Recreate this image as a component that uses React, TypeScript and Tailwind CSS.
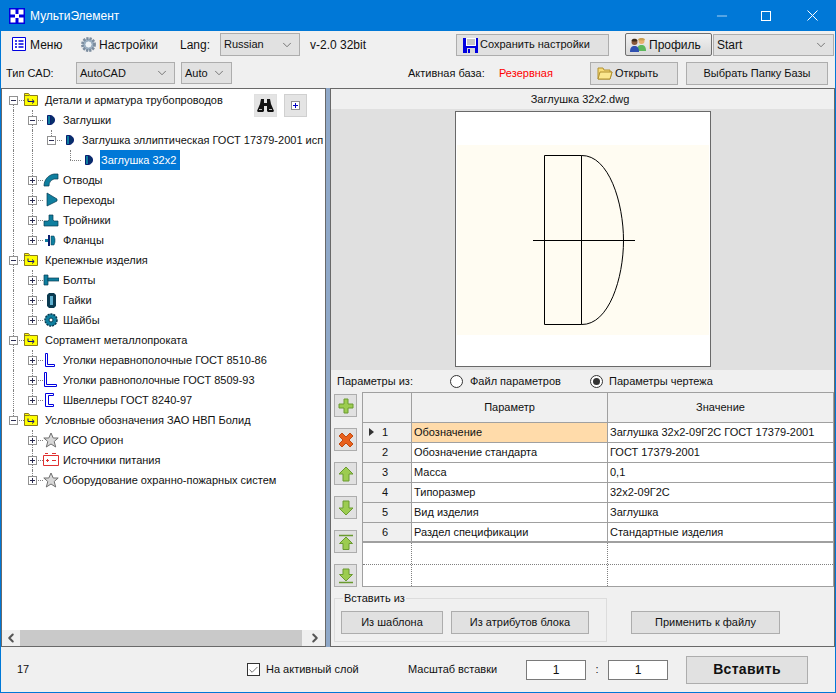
import React from 'react';
import { ChevronDown, Minus, Check, ChevronLeft, ChevronRight } from 'lucide-react';

const Btn = ({ className = '', children }: { className?: string; children: React.ReactNode }) => (
  <div className={`flex shrink-0 items-center justify-center border border-[#adadad] bg-[#e1e1e1] ${className}`}>{children}</div>
);

const Select = ({ value, className = '' }: { value: string; className?: string }) => (
  <div className={`flex shrink-0 items-center justify-between border border-[#adadad] bg-[#e1e1e1] pl-[3px] pr-[5px] ${className}`}>
    <span>{value}</span>
    <ChevronDown className="h-3.5 w-3.5 text-[#555]" strokeWidth={1.3} />
  </div>
);

const Floppy = () => (
  <svg width="16" height="16" viewBox="0 0 16 16" className="shrink-0">
    <path d="M0 1h15v15H0z" fill="#0000e0" />
    <path d="M3 1h10v8H3z" fill="#fff" />
    <path d="M4 3h8M4 5h8M4 7h8" stroke="#8a8a8a" />
    <path d="M4 11h8v5H4z" fill="#d8d8d8" />
    <path d="M5 12h2v4H5z" fill="#0000e0" />
  </svg>
);

const Users = () => (
  <svg width="18" height="16" viewBox="0 0 18 16" className="shrink-0">
    <circle cx="12.5" cy="4" r="3" fill="#e8b070" />
    <path d="M9 2.500c1-2 6-2 7 0l-1 1h-5z" fill="#c9a050" />
    <path d="M8 14c0-5 2-6 4.500-6s4.500 1 4.500 6z" fill="#5cb85c" />
    <circle cx="5.5" cy="5" r="3" fill="#8a5a3a" />
    <path d="M2.500 3.500c1-2.500 5-2.500 6 0l-1 1h-4z" fill="#3a2a1a" />
    <path d="M1 15c0-5 2-6 4.500-6s4.500 1 4.500 6z" fill="#3050b0" />
  </svg>
);

const SmallFolder = () => (
  <svg width="16" height="14" viewBox="0 0 16 14" className="shrink-0">
    <path d="M1 13V2h5l1 2h6v2h2l-2 7z" fill="#f8dc78" stroke="#b09030" />
    <path d="M1 13l2-7h12l-2 7z" fill="#fbe78f" stroke="#b09030" />
  </svg>
);

const TreeFolder = () => (
  <svg width="14" height="14" viewBox="0 0 14 14" className="shrink-0">
    <path d="M.5 13.500v-12h4l1.500 2h7.500v10z" fill="#ffff00" stroke="#8a7a20" />
    <path d="M.5 3.500h5" stroke="#8a7a20" />
    <path d="M4 6.500v3h6M8 7.500l2.200 2-2.200 2" fill="none" stroke="#0a0a80" />
  </svg>
);

// teal pipe fittings in the tree
const teal = '#0f7f9f';
const navy = '#0a1f70';
const fittings: Record<string, React.ReactNode> = {
  cap: (
    <>
      <path d="M4.500 3.500h3v9h-3z" fill={teal} stroke={navy} />
      <path d="M7.500 3.500c2.500 .5 4 2 4 4.500s-1.500 4-4 4.500z" fill="#06306a" stroke={navy} />
    </>
  ),
  elbow: <path d="M1 14c0-6 4-11 10-12h4v5h-4c-3 1-5 3-5 7z" fill={teal} stroke="#063a50" strokeWidth=".7" />,
  reducer: <path d="M4 1l10 6v2L4 14z" fill={teal} stroke="#063a50" strokeWidth=".7" />,
  tee: <path d="M1 9h4l1-1V3h4v5l1 1h4v5H1z" fill={teal} stroke="#063a50" strokeWidth=".7" />,
  flange: (
    <>
      <path d="M5 3h2v11H5z" fill={navy} />
      <path d="M8 4h3l1 3v3l-1 3H8z" fill={teal} stroke="#063a50" strokeWidth=".5" />
      <path d="M2 7h3v3H2z" fill={teal} />
    </>
  ),
  bolt: (
    <>
      <path d="M1 3h4v10H1z" fill={teal} stroke="#063a50" strokeWidth=".7" />
      <path d="M5 6h11v3H5z" fill={teal} stroke="#063a50" strokeWidth=".7" />
    </>
  ),
  nut: (
    <>
      <path d="M4 3l2-2h5l2 2v11l-2 2H6l-2-2z" fill="#0a3a50" />
      <path d="M7 4h3v9H7z" fill="#5fb0d0" />
    </>
  ),
  washer: (
    <>
      <circle cx="8" cy="8" r="6" fill={teal} stroke="#063a50" strokeWidth="1.500" strokeDasharray="2 1" />
      <circle cx="8" cy="8" r="2" fill="#fff" stroke="#063a50" />
    </>
  ),
  angle1: <path d="M2.500 1.500h2v11h7v2h-9z" fill="#fff" stroke="#0000e0" />,
  angle2: <path d="M1.500 .5h2v12h10v2h-12z" fill="#fff" stroke="#0000e0" />,
  channel: <path d="M2.500 1.500h8v2h-5v9h5v2h-8z" fill="#fff" stroke="#0000e0" />,
  star: <path d="M8 1l2.200 5h5l-4 3.500 1.500 5.500L8 12l-4.700 3 1.500-5.500-4-3.500h5z" fill="#d8d8d8" stroke="#707070" />,
  battery: (
    <>
      <path d="M.5 3.500h15v10H.5z" fill="#fff" stroke="#e03030" />
      <path d="M2 1.500h3M9 1.500h4M3 8.500h3M4.500 7v3M9 8.500h4" stroke="#e03030" />
    </>
  ),
};

type Node = {
  level: number;
  label: string;
  icon: string;
  open?: boolean;
  leaf?: boolean;
  lines: number[];
  half?: number[];
  selected?: boolean;
};

const tree: Node[] = [
  { level: 0, label: 'Детали и арматура трубопроводов', icon: 'folder', open: true, lines: [], half: [] },
  { level: 1, label: 'Заглушки', icon: 'cap', open: true, lines: [13, 32] },
  { level: 2, label: 'Заглушка эллиптическая ГОСТ 17379-2001 исп', icon: 'cap', open: true, lines: [13, 32], half: [51] },
  { level: 3, label: 'Заглушка 32x2', icon: 'cap', leaf: true, selected: true, lines: [13, 32], half: [70] },
  { level: 1, label: 'Отводы', icon: 'elbow', lines: [13, 32] },
  { level: 1, label: 'Переходы', icon: 'reducer', lines: [13, 32] },
  { level: 1, label: 'Тройники', icon: 'tee', lines: [13, 32] },
  { level: 1, label: 'Фланцы', icon: 'flange', lines: [13], half: [32] },
  { level: 0, label: 'Крепежные изделия', icon: 'folder', open: true, lines: [13] },
  { level: 1, label: 'Болты', icon: 'bolt', lines: [13, 32] },
  { level: 1, label: 'Гайки', icon: 'nut', lines: [13, 32] },
  { level: 1, label: 'Шайбы', icon: 'washer', lines: [13], half: [32] },
  { level: 0, label: 'Сортамент металлопроката', icon: 'folder', open: true, lines: [13] },
  { level: 1, label: 'Уголки неравнополочные ГОСТ 8510-86', icon: 'angle1', lines: [13, 32] },
  { level: 1, label: 'Уголки равнополочные ГОСТ 8509-93', icon: 'angle2', lines: [13, 32] },
  { level: 1, label: 'Швеллеры ГОСТ 8240-97', icon: 'channel', lines: [13], half: [32] },
  { level: 0, label: 'Условные обозначения ЗАО НВП Болид', icon: 'folder', open: true, lines: [], half: [13] },
  { level: 1, label: 'ИСО Орион', icon: 'star', lines: [32] },
  { level: 1, label: 'Источники питания', icon: 'battery', lines: [32] },
  { level: 1, label: 'Оборудование охранно-пожарных систем', icon: 'star', lines: [], half: [32] },
];

const boxX = [13, 32, 51, 70];
const iconX = [22, 41, 60, 79];
const textX = [43, 61, 80, 98];

const TreeRow = ({ node, index }: { node: Node; index: number }) => {
  const center = boxX[node.level];
  return (
    <div className="relative h-5 w-full">
      {node.lines.map((x) => (
        <div key={x} className="absolute top-0 bottom-0 border-l border-dotted border-[#808080]" style={{ left: x - 2 }} />
      ))}
      {(node.half || []).map((x) => (
        <div key={x} className="absolute top-0 h-2.5 border-l border-dotted border-[#808080]" style={{ left: x - 2 }} />
      ))}
      {index === 0 && <div className="absolute top-2.5 bottom-0 left-[11px] border-l border-dotted border-[#808080]" />}
      <div
        className="absolute top-2.5 border-t border-dotted border-[#808080]"
        style={{ left: center - 2, width: iconX[node.level] - center + 2 }}
      />
      {!node.leaf && (
        <div
          className="absolute top-[6px] flex h-[9px] w-[9px] items-center justify-center border border-[#919191] bg-white"
          style={{ left: center - 6 }}
        >
          <div className="relative h-[5px] w-[5px]">
            <div className="absolute top-[2px] left-0 h-px w-[5px] bg-[#2a2a50]" />
            {!node.open && <div className="absolute top-0 left-[2px] h-[5px] w-px bg-[#2a2a50]" />}
          </div>
        </div>
      )}
      <div className="absolute top-[2px]" style={{ left: iconX[node.level] }}>
        {node.icon === 'folder' ? (
          <TreeFolder />
        ) : (
          <svg width="16" height="16" viewBox="0 0 16 16">
            {fittings[node.icon]}
          </svg>
        )}
      </div>
      <div
        className={`absolute top-0 flex h-5 items-center whitespace-nowrap ${node.selected ? 'bg-[#0078d7] pr-[4px] pl-px text-white' : ''}`}
        style={{ left: textX[node.level] }}
      >
        {node.label}
      </div>
    </div>
  );
};

const params = [
  ['1', 'Обозначение', 'Заглушка 32x2-09Г2С ГОСТ 17379-2001'],
  ['2', 'Обозначение стандарта', 'ГОСТ 17379-2001'],
  ['3', 'Масса', '0,1'],
  ['4', 'Типоразмер', '32x2-09Г2С'],
  ['5', 'Вид изделия', 'Заглушка'],
  ['6', 'Раздел спецификации', 'Стандартные изделия'],
];

const sideIcons: React.ReactNode[] = [
  <path d="M6 1h4v5h5v4h-5v5H6v-5H1V6h5z" fill="#9ccc50" stroke="#6a9a30" />,
  <path d="M1 4l3-3 4 4 4-4 3 3-4 4 4 4-3 3-4-4-4 4-3-3 4-4z" fill="#e8601c" stroke="#c04a10" />,
  <path d="M8 1l7 7h-4v7H5V8H1z" fill="#9ccc50" stroke="#6a9a30" />,
  <path d="M8 15l7-7h-4V1H5v7H1z" fill="#9ccc50" stroke="#6a9a30" />,
  <>
    <path d="M1 1.500h14" stroke="#6a9a30" strokeWidth="1.500" />
    <path d="M8 3l6.500 6.500H11v6H5v-6H1.500z" fill="#9ccc50" stroke="#6a9a30" />
  </>,
  <>
    <path d="M1 14.500h14" stroke="#6a9a30" strokeWidth="1.500" />
    <path d="M8 13L1.500 6.500H5V1h6v5.500h3.500z" fill="#9ccc50" stroke="#6a9a30" />
  </>,
];

const Radio = ({ on }: { on?: boolean }) => (
  <div className="flex h-[13px] w-[13px] shrink-0 items-center justify-center rounded-full border border-[#333] bg-white">
    {on && <div className="h-[7px] w-[7px] rounded-full bg-[#333]" />}
  </div>
);

export default function App() {
  return (
    <div
      className="flex h-[693px] w-[836px] flex-col overflow-hidden border-x border-b border-[#0078d7] bg-[#f0f0f0] text-[11px] text-[#111]"
      style={{ fontFamily: '"Liberation Sans", Arial, sans-serif' }}
    >
      {/* Title bar */}
      <div className="flex h-[31px] shrink-0 items-center bg-[#0078d7] pl-2 text-[12px] text-white">
        <svg width="16" height="16" viewBox="0 0 16 16" className="shrink-0">
          <path d="M0 0h16v16H0z" fill="#0000e0" />
          <path d="M1.500 1.500h5v5h-5zM9.500 1.500h5v5h-5zM1.500 9.500h5v5h-5zM9.500 9.500h5v5h-5z" fill="#fff" />
          <path d="M6 6h4v4H6z" fill="#fff" />
        </svg>
        <span className="ml-[5px]">МультиЭлемент</span>
        <div className="ml-auto flex items-center">
          <Minus className="mr-[31px] h-[16px] w-[16px]" strokeWidth={1} />
          <div className="mr-[36px] h-[10px] w-[10px] border border-white" />
          <svg width="11" height="11" viewBox="0 0 11 11" className="mr-[17px]">
            <path d="M.5 .5l10 10M10.500 .5l-10 10" stroke="#fff" />
          </svg>
        </div>
      </div>

      {/* Toolbar 1 */}
      <div className="flex h-[27px] shrink-0 items-center pl-[11px]">
        <svg width="15" height="15" viewBox="0 0 15 15" className="shrink-0">
          <path d="M.5 .5h13v13H.5z" fill="#fff" stroke="#0000e0" />
          <path d="M3 4h2M3 7h2M3 10h2M6.500 4h5M6.500 7h5M6.500 10h5" stroke="#0000e0" strokeWidth="1.500" />
        </svg>
        <span className="ml-[3px] w-[50px] shrink-0 text-[12px]">Меню</span>
        <svg width="17" height="17" viewBox="0 0 24 24" className="shrink-0">
          <circle cx="12" cy="12" r="8.500" fill="#9fb4c7" stroke="#7b8c9e" strokeWidth="4" strokeDasharray="3 1.500" />
          <circle cx="12" cy="12" r="5" fill="#eef3f7" stroke="#7f97ad" />
        </svg>
        <span className="ml-[2px] w-[81px] shrink-0 text-[12px]">Настройки</span>
        <span className="w-[40px] shrink-0 text-[12px]">Lang:</span>
        <Select value="Russian" className="h-[23px] w-[80px]" />
        <span className="ml-[10px] w-[146px] shrink-0 text-[12px]">v-2.0 32bit</span>
        <Btn className="h-[22px] w-[153px] !justify-start gap-[1px] pl-[6px]">
          <Floppy />
          <span>Сохранить настройки</span>
        </Btn>
        <div className="ml-4 flex h-[23px] w-[87px] shrink-0 items-center gap-[2px] rounded-[2px] border border-[#707070] bg-gradient-to-b from-[#f2f2f2] to-[#d8d8d8] pl-[3px] text-[12px]">
          <Users />
          <span>Профиль</span>
        </div>
        <Select value="Start" className="ml-px h-[22px] w-[121px] text-[12px]" />
      </div>

      {/* Toolbar 2 */}
      <div className="flex h-[30px] shrink-0 items-center pl-[5px]">
        <span className="w-[70px] shrink-0">Тип CAD:</span>
        <Select value="AutoCAD" className="h-[22px] w-[99px]" />
        <Select value="Auto" className="ml-[6px] h-[22px] w-[51px]" />
        <span className="ml-[176px] w-[91px] shrink-0">Активная база:</span>
        <span className="w-[91px] shrink-0 text-[#ff0000]">Резервная</span>
        <Btn className="h-[23px] w-[88px] !justify-start gap-[2px] pl-[6px]">
          <SmallFolder />
          <span>Открыть</span>
        </Btn>
        <Btn className="ml-2 h-[23px] w-[142px]">Выбрать Папку Базы</Btn>
      </div>

      {/* Main split */}
      <div className="flex h-[559px] shrink-0 bg-[#8fa8c8]">
        {/* Tree */}
        <div className="relative flex w-[325px] shrink-0 flex-col border border-[#696969] bg-white">
          <div className="flex-1 pt-px">
            {tree.map((n, i) => (
              <TreeRow key={n.label + i} node={n} index={i} />
            ))}
          </div>
          <div className="absolute top-[5px] left-[252px] flex gap-[7px]">
            <div className="flex h-[23px] w-[23px] items-center justify-center border border-[#e0e0e0] bg-[#e4e4e4]">
              <svg width="17" height="15" viewBox="0 0 17 15">
                <path d="M4 1h3v4h3V1h3l1 5 3 7-1 1h-5l-1-1V8H7v5l-1 1H1l-1-1 3-7z" fill="#111" />
                <path d="M2 11h3v1H2zM12 11h3v1h-3z" fill="#bbb" />
              </svg>
            </div>
            <div className="flex h-[23px] w-[23px] items-center justify-center border border-[#d0d0d0] bg-[#e4e4e4]">
              <div className="relative h-[9px] w-[9px] border border-[#909090] bg-white">
                <div className="absolute top-[3px] left-px h-px w-[5px] bg-[#0000c0]" />
                <div className="absolute top-px left-[3px] h-[5px] w-px bg-[#0000c0]" />
              </div>
            </div>
          </div>
          <div className="flex h-[16px] shrink-0 items-center bg-[#f0f0f0]">
            <ChevronLeft className="h-[14px] w-[18px] shrink-0 text-[#555]" strokeWidth={3.5} />
            <div className="h-full w-[282px] bg-[#c9c9c9]" />
            <ChevronRight className="ml-auto h-[14px] w-[20px] shrink-0 text-[#555]" strokeWidth={3.5} />
          </div>
        </div>

        <div className="w-[4px] shrink-0" />

        {/* Right panel */}
        <div className="flex min-w-0 flex-1 flex-col border border-[#696969] bg-[#f0f0f0]">
          <div className="flex h-5 shrink-0 items-center justify-center pr-[5px]">Заглушка 32x2.dwg</div>
          <div className="flex h-[261px] shrink-0 justify-center bg-[#e0e0e0] pt-[2px]">
            <div className="flex h-[256px] w-[256px] flex-col justify-center border border-[#696969] bg-white px-px pt-[2px]">
              <svg width="252" height="190" viewBox="0 0 252 190" className="bg-[#fffcf2]">
                <g fill="none" stroke="#000" strokeWidth="1">
                  <path d="M87.500 10.500h37v169h-37z" />
                  <path d="M76 95.500h102" />
                  <path d="M124.500 10.500C152 10 166.500 58 166.500 95.500S152 180 124.500 179.500" />
                </g>
              </svg>
            </div>
          </div>

          {/* Source radios */}
          <div className="flex h-[22px] shrink-0 items-center pl-[6px]">
            <span className="w-[113px] shrink-0">Параметры из:</span>
            <Radio />
            <span className="ml-[7px] w-[120px] shrink-0">Файл параметров</span>
            <Radio on />
            <span className="ml-[6px]">Параметры чертежа</span>
          </div>

          {/* Grid and move buttons */}
          <div className="flex h-[195px] shrink-0">
            <div className="ml-[3px] flex w-[28px] shrink-0 flex-col gap-[11px] pt-[2px]">
              {sideIcons.map((icon, i) => (
                <Btn key={i} className="h-[23px] w-[23px]">
                  <svg width="16" height="16" viewBox="0 0 16 16">
                    {icon}
                  </svg>
                </Btn>
              ))}
            </div>
            <div className="flex w-[472px] shrink-0 flex-col border border-[#a0a0a0] bg-white">
              <div className="flex h-[30px] shrink-0 border-b border-[#a0a0a0] bg-[#f0f0f0]">
                <div className="w-[49px] shrink-0 border-r border-[#a0a0a0]" />
                <div className="flex w-[196px] shrink-0 items-center justify-center border-r border-[#a0a0a0]">Параметр</div>
                <div className="flex flex-1 items-center justify-center">Значение</div>
              </div>
              {params.map(([n, name, val], i) => (
                <div key={n} className={`flex h-5 shrink-0 border-b border-[#a0a0a0] ${i === 5 ? 'border-b-2' : ''}`}>
                  <div className="relative flex w-[49px] shrink-0 items-center justify-center border-r border-[#a0a0a0] bg-[#f0f0f0] pr-1">
                    {i === 0 && (
                      <div className="absolute top-[5px] left-[6px] h-0 w-0 border-y-[4px] border-l-[5px] border-y-transparent border-l-[#333]" />
                    )}
                    {n}
                  </div>
                  <div className={`flex w-[196px] shrink-0 items-center border-r border-[#a0a0a0] pl-[2px] ${i === 0 ? 'bg-[#ffdbaa]' : ''}`}>
                    {name}
                  </div>
                  <div className="flex flex-1 items-center pl-[2px]">{val}</div>
                </div>
              ))}
              {[0, 1].map((r) => (
                <div key={r} className={`flex shrink-0 ${r === 0 ? 'h-[22px] border-b border-dotted border-[#808080]' : 'h-[21px]'}`}>
                  <div className="w-[49px] shrink-0 border-r border-dotted border-[#808080]" />
                  <div className="w-[196px] shrink-0 border-r border-dotted border-[#808080]" />
                </div>
              ))}
            </div>
          </div>

          {/* Insert from */}
          <div className="mt-[5px] flex pl-[3px]">
            <fieldset className="h-[50px] w-[273px] shrink-0 border border-[#dcdcdc] pl-[6px]">
              <legend className="ml-[2px] px-[1px] text-[11px] leading-[12px]">Вставить из</legend>
              <div className="mt-[7px] flex gap-2">
                <Btn className="h-[23px] w-[102px]">Из шаблона</Btn>
                <Btn className="h-[23px] w-[138px]">Из атрибутов блока</Btn>
              </div>
            </fieldset>
            <Btn className="mt-[19px] ml-[24px] h-[23px] w-[149px]">Применить к файлу</Btn>
          </div>
        </div>
      </div>

      {/* Footer */}
      <div className="flex flex-1 items-center pl-4">
        <span className="w-[230px] shrink-0">17</span>
        <div className="flex h-[13px] w-[13px] shrink-0 items-center justify-center border border-[#333] bg-white">
          <Check className="h-3 w-3 text-[#333]" strokeWidth={1.5} />
        </div>
        <span className="ml-[6px] w-[142px] shrink-0">На активный слой</span>
        <span className="w-[118px] shrink-0">Масштаб вставки</span>
        <div className="flex h-5 w-[60px] shrink-0 items-center justify-center border border-[#7a7a7a] bg-white text-[12px]">1</div>
        <span className="w-[22px] shrink-0 text-center">:</span>
        <div className="flex h-5 w-[60px] shrink-0 items-center justify-center border border-[#7a7a7a] bg-white text-[12px]">1</div>
        <Btn className="ml-[18px] h-[28px] w-[122px] text-[14px] font-bold tracking-[0.3px]">Вставить</Btn>
      </div>
    </div>
  );
}
